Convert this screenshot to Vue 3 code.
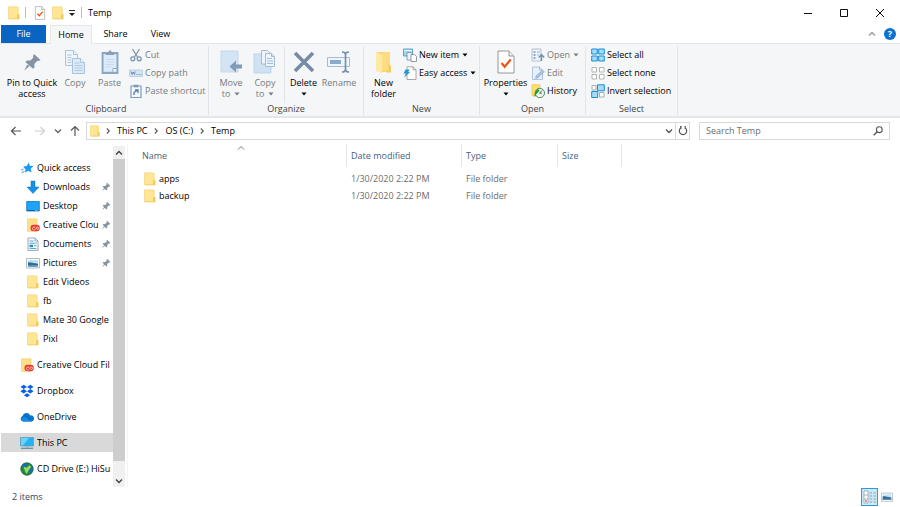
<script setup>
import { ref } from 'vue'

const query = ref('')
const selected = ref('This PC')
const view = ref('details')

const quickAccess = [
  { name: 'Downloads', icon: 'download', pinned: true },
  { name: 'Desktop', icon: 'desktop', pinned: true },
  { name: 'Creative Clou', icon: 'creative', pinned: true },
  { name: 'Documents', icon: 'document', pinned: true },
  { name: 'Pictures', icon: 'picture', pinned: true },
  { name: 'Edit Videos', icon: 'folder' },
  { name: 'fb', icon: 'folder' },
  { name: 'Mate 30 Google', icon: 'folder' },
  { name: 'Pixl', icon: 'folder' },
]
const places = [
  { name: 'Creative Cloud Fil', icon: 'creative' },
  { name: 'Dropbox', icon: 'dropbox' },
  { name: 'OneDrive', icon: 'onedrive' },
  { name: 'This PC', icon: 'pc' },
  { name: 'CD Drive (E:) HiSu', icon: 'disc' },
]
const crumbs = ['This PC', 'OS (C:)', 'Temp']
const files = [
  { name: 'apps', date: '1/30/2020 2:22 PM', type: 'File folder' },
  { name: 'backup', date: '1/30/2020 2:22 PM', type: 'File folder' },
]
const groups = [
  {
    label: 'Clipboard', key: 'clipboard',
    large: [
      { lines: ['Pin to Quick', 'access'], icon: 'bigpin', size: 'w-pin' },
      { lines: ['Copy'], icon: 'copy', size: 'w-copy', dim: true },
      { lines: ['Paste'], icon: 'paste', size: 'w-paste', dim: true },
    ],
    small: [
      { label: 'Cut', icon: 'cut', dim: true },
      { label: 'Copy path', icon: 'path', dim: true },
      { label: 'Paste shortcut', icon: 'shortcut', dim: true },
    ],
  },
  {
    label: 'Organize', key: 'organize',
    large: [
      { lines: ['Move', 'to'], icon: 'move', size: 'w-move', dim: true, inlineCaret: true },
      { lines: ['Copy', 'to'], icon: 'copyto', size: 'w-move', dim: true, inlineCaret: true },
      { lines: ['Delete'], icon: 'delete', size: 'w-delete', caret: true, split: true },
      { lines: ['Rename'], icon: 'rename', size: 'w-move', dim: true },
    ],
    small: [],
  },
  {
    label: 'New', key: 'new',
    large: [{ lines: ['New', 'folder'], icon: 'newfolder', size: 'w-new' }],
    small: [
      { label: 'New item', icon: 'newitem', caret: true },
      { label: 'Easy access', icon: 'easy', caret: true },
    ],
  },
  {
    label: 'Open', key: 'open',
    large: [{ lines: ['Properties'], icon: 'properties', size: 'w-props', caret: true }],
    small: [
      { label: 'Open', icon: 'open', dim: true, caret: true },
      { label: 'Edit', icon: 'edit', dim: true },
      { label: 'History', icon: 'history' },
    ],
  },
  {
    label: 'Select', key: 'select',
    large: [],
    small: [
      { label: 'Select all', icon: 'selall' },
      { label: 'Select none', icon: 'selnone' },
      { label: 'Invert selection', icon: 'selinv' },
    ],
  },
]
</script>

<template>
  <div class="window">
    <svg class="sprite" aria-hidden="true">
      <symbol id="folder" viewBox="0 0 14 14">
        <path d="M1.500.8h9v12h-9z" fill="#ffe694" stroke="#f2d072" stroke-width=".6" />
        <path d="M10 8h2.500v5.300H2v-.8h8z" fill="#f5cb58" />
        <path d="M10.200 1.200h1.500V8.500h-1.500z" fill="#ffe08a" />
      </symbol>
      <symbol id="creative" viewBox="0 0 14 14">
        <path d="M1.500.8h9.500v12.500H1.500z" fill="#ffe08a" stroke="#efc964" stroke-width=".6" />
        <rect x="4.500" y="6.800" width="9.300" height="6.500" rx="3.200" fill="#e8372c" />
        <path d="M9.300 11.500c-1 .9-2.800.5-2.800-1 0-1.600 1.900-1.900 2.700-.8l1.200 1.300c1 .9 2.300.2 2.200-.8-.1-1.400-1.900-1.600-2.600-.5" fill="none" stroke="#fff" stroke-width=".7" />
      </symbol>
      <symbol id="doc-check" viewBox="0 0 18 24">
        <path d="M1 1h11l5 5v17H1z" fill="#fff" stroke="#969696" />
        <path d="M12 1v5h5" fill="#eee" stroke="#969696" />
        <path d="M4.500 13l3.200 3.700 6-7.200" fill="none" stroke="#f0540f" stroke-width="2.200" />
      </symbol>
      <symbol id="star" viewBox="0 0 14 14">
        <path d="M8.800 1.500l.9 3.200 3.600.3-2.600 2.700.8 3.800-3.300-1.800-3 2 .3-3.500-2.400-2.400 3.600-.7z" fill="#1a9af0" />
        <path d="M.8 9l2.700-.8M1.500 12l3-2" stroke="#5fb9f5" stroke-width="1.200" />
      </symbol>
      <symbol id="download" viewBox="0 0 14 14">
        <path d="M5 1h4v6h4l-6 6.500L1 7h4z" fill="#1390e8" stroke="#0b79cc" stroke-width=".5" />
      </symbol>
      <symbol id="desktop" viewBox="0 0 14 14">
        <path d="M.7 2.500h12.600v9.500H.7z" fill="#1ea2fa" stroke="#0878c8" stroke-width=".8" />
        <path d="M1 11.500h12" stroke="#0765ad" stroke-width="1" /><path d="M9 11.500h3" stroke="#8ed4ff" stroke-width=".6" />
      </symbol>
      <symbol id="document" viewBox="0 0 14 14">
        <path d="M2 1h7l3 3v9.500H2z" fill="#f8fbfd" stroke="#8498a5" stroke-width=".8" />
        <path d="M9 1v3h3" fill="none" stroke="#8498a5" stroke-width=".7" />
        <path d="M3.500 4h4M3.500 6.200h7M3.500 11.500h7" stroke="#4ba2cf" stroke-width=".9" />
        <path d="M3.500 7.700h3.500v2.500H3.500z" fill="#2790c9" /><path d="M8 8.800h2.500" stroke="#4ba2cf" />
      </symbol>
      <symbol id="picture" viewBox="0 0 14 14">
        <path d="M.5 2.500h13v9.500H.5z" fill="#fff" stroke="#a2a8ab" stroke-width=".8" />
        <path d="M2 4h10v6.500H2z" fill="#bfe3f6" />
        <path d="M2 6.200c3-.2 5 .6 10 1.500v2.800H2z" fill="#336a91" /><path d="M2 9h10v1.500H2z" fill="#5595bc" />
      </symbol>
      <symbol id="dropbox" viewBox="0 0 14 14">
        <path d="M3.700.8L7 3 3.700 5.100.4 3zM10.300.8L13.600 3l-3.300 2.100L7 3zM3.700 5.100L7 7.200 3.700 9.400.4 7.200zM10.300 5.100l3.300 2.100-3.300 2.200L7 7.200zM7 9.300l3.100 2L7 13.300l-3.100-2z" fill="#0a5fe8" />
      </symbol>
      <symbol id="onedrive" viewBox="0 0 14 14">
        <path d="M3.300 11.500A2.900 2.900 0 012.500 6a4.200 4.200 0 017.800-.6 3.100 3.100 0 011.200 6.100z" fill="#0a75d0" />
        <path d="M6 6.500l5.800 4.900H3.300C1.500 11.500.6 10 .6 8.800z" fill="#1689e0" /><path d="M4.500 5l5.500 5" stroke="#075bb0" stroke-width="1" />
      </symbol>
      <symbol id="pc" viewBox="0 0 14 14">
        <path d="M.5 1.500h13v8.500H.5z" fill="#27b1ef" stroke="#5c9ab8" stroke-width=".7" />
        <path d="M1 2h8L3 9.600H1z" fill="#68d3fa" />
        <path d="M5.500 10.300h3v1.200h-3z" fill="#a5b0b7" /><path d="M1 12.300h12" stroke="#5c8aa5" stroke-width="1.200" />
      </symbol>
      <symbol id="disc" viewBox="0 0 14 14">
        <circle cx="7" cy="7" r="6.200" fill="#258a3b" stroke="#174f47" stroke-width=".8" />
        <path d="M3 1.800C6 1 8 2 7 4L4.500 6 1 5zM8 7l4.500-3c1 3 .3 5.500-1.700 7.300L8 10z" fill="#1c6cad" />
        <path d="M3.500 4.500l3.200 1.200 3-2.500L11 5 8 9.500 6.500 12 5 9z" fill="#8fe05a" />
      </symbol>
      <symbol id="pin" viewBox="0 0 12 12">
        <path d="M7.300.8l4 4-1.200.7-.7-.2-2 2 .1 2-1 .9L2 5.700l1-.9 2 .1 1.900-2-.3-.8zM3.800 7.200l1 1L1 11.200z" fill="#8795a1" />
      </symbol>
      <symbol id="bigpin" viewBox="0 0 24 24">
        <path d="M14 4l6.500 6-1.800 1-1.400-.3-3 3.300.3 3.300-1.600 1.500-7.600-6.900 1.500-1.500 3.500.2 3-3.200-.4-1.500zM7.500 14.500l2 1.700L4 20.500z" fill="#8493a2" />
      </symbol>
      <symbol id="copy" viewBox="0 0 24 24">
        <g fill="#edf4fb" stroke="#a9c3dc"><path d="M2.500.5h8l4 4v11h-12z" /><path d="M10.500.5v4h4" />
          <path d="M9.500 8.500h8l4 4v11h-12z" fill="#dce9f6" /><path d="M17.500 8.500v4h4" /></g>
        <path d="M4.500 5h4M4.500 7.500h4M4.500 10h4M4.500 12.500h4M11.500 13h5M11.500 15.500h8M11.500 18h8M11.500 20.500h8" stroke="#b0c8e0" />
      </symbol>
      <symbol id="paste" viewBox="0 0 24 24">
        <path d="M4.500 3h15v20h-15z" fill="#c9def2" stroke="#8aa6c5" stroke-width="1.800" /><path d="M6 5h12v16H6z" fill="#dceafa" />
        <path d="M8 5V2h2.500L11 .5h2l.5 1.500H16v3z" fill="#8b9eb2" />
        <path d="M8 9.500h8M8 12h8M8 14.500h8M8 17h5" stroke="#c8dbee" /><path d="M15 22.500v-4h4" fill="#fff" stroke="#8aa6c5" />
      </symbol>
      <symbol id="move" viewBox="0 0 24 24">
        <path d="M2 1h17v21H2z" fill="#d3e4f4" stroke="#c3d8ec" />
        <path d="M23 14.500h-6v-4L10.500 16.500l6.500 6v-4h6z" fill="#819bb8" />
      </symbol>
      <symbol id="copyto" viewBox="0 0 24 24">
        <path d="M1 4h17v19H1z" fill="#cfe1f3" stroke="#bfd5ea" />
        <path d="M8.500.5h6l2.500 2.500v11H8.500z" fill="#edf4fb" stroke="#a3bdd6" /><path d="M12.500 3.500h6l3 3v10h-9z" fill="#edf4fb" stroke="#a3bdd6" />
        <path d="M18.500 3.500v3h3M14 8.500h5M14 11h6M14 13.500h6" stroke="#a3bdd6" fill="none" />
      </symbol>
      <symbol id="delete" viewBox="0 0 24 24"><path d="M3 3l18 18M21 3L3 21" stroke="#748ca8" stroke-width="3.600" /></symbol>
      <symbol id="rename" viewBox="0 0 24 24">
        <path d="M.5 7.500h22v9H.5z" fill="#eff5fb" stroke="#a4bbd1" /><path d="M3 10h11v4H3z" fill="#8ba9c8" />
        <path d="M15 2c2 0 3.500.5 3.500 2.500v15c0 2-1.500 2.500-3.500 2.500M22 2c-2 0-3.500.5-3.500 2.500v15c0 2 1.500 2.500 3.500 2.500" fill="none" stroke="#7891ac" stroke-width="1.700" />
      </symbol>
      <symbol id="newfolder" viewBox="0 0 24 24">
        <path d="M4 2h14v20H8z" fill="#fbd673" /><path d="M4 2l6 3v18l-6-2z" fill="#ffe9a5" /><path d="M10 2.500h8V20h-8z" fill="#ffdc82" /><path d="M16.500 14l2.500 2v6.500h-5l2.500-2z" fill="#f5ca60" />
      </symbol>
      <symbol id="properties" viewBox="0 0 24 24"><use href="#doc-check" x="3" y="0" width="18" height="24" /></symbol>
      <symbol id="cut" viewBox="0 0 14 14">
        <path d="M3.500 1l5 8M10.500 1l-5 8" stroke="#8799ac" stroke-width="1.400" />
        <circle cx="3.800" cy="10.800" r="2" fill="none" stroke="#6e91b8" stroke-width="1.200" /><circle cx="10.200" cy="10.800" r="2" fill="none" stroke="#6e91b8" stroke-width="1.200" />
      </symbol>
      <symbol id="path" viewBox="0 0 14 14">
        <path d="M.5 4h13v6.500H.5z" fill="#d4e5f5" stroke="#b3c9de" stroke-width=".8" /><path d="M2 5.500l1 3L4.200 6l1.200 2.500.8-3M7.500 8.500h1M9.500 8.500h1M11.500 8.500h1" fill="none" stroke="#6687aa" stroke-width=".9" />
      </symbol>
      <symbol id="shortcut" viewBox="0 0 14 14">
        <path d="M2 2h10v11.500H2z" fill="#f5f9fd" stroke="#7c9bbd" stroke-width="1.200" /><path d="M4.500.8h5v2.500h-5z" fill="#8299b2" />
        <path d="M5 11V8.500L8 6.500M6 6h3v3" fill="none" stroke="#537ba8" stroke-width="1.300" />
      </symbol>
      <symbol id="newitem" viewBox="0 0 14 14">
        <path d="M.5 1h9v7h-9z" fill="#9edaf4" stroke="#3d8dbb" stroke-width=".8" /><path d="M1 2.500h8" stroke="#fff" />
        <path d="M4 4.500h4l2 2V12H4z" fill="#e9f5fc" stroke="#6f8ca0" stroke-width=".8" /><path d="M8 6.500h3.500l2 2v5H8z" fill="#fff" stroke="#79848e" stroke-width=".8" />
      </symbol>
      <symbol id="easy" viewBox="0 0 14 14">
        <path d="M4 .8h6l3 3v9.700H4z" fill="#fff" stroke="#929292" stroke-width=".8" /><path d="M10 .8v3h3" fill="none" stroke="#929292" stroke-width=".8" />
        <path d="M2.500 3.500h4.300L5.200 6h2L1 11.500l1.800-4H.5z" fill="#2798d4" />
      </symbol>
      <symbol id="open" viewBox="0 0 14 14">
        <path d="M1 1h9v12H1z" fill="#eef4f9" stroke="#a2b5c7" stroke-width=".8" /><path d="M2.500 3h2v2h-2zM2.500 6h2v2h-2zM2.500 9h2v2h-2z" fill="#91abc8" /><path d="M6 4h3M6 7h2" stroke="#a2b5c7" />
        <path d="M10.500 13V7M7.800 9.500L10.500 6.500 13.200 9.500" fill="none" stroke="#7190b2" stroke-width="1.400" />
      </symbol>
      <symbol id="edit" viewBox="0 0 14 14">
        <path d="M1.500 1h7l3 3v9.500h-10z" fill="#e8f1fa" stroke="#a0b9d2" stroke-width=".8" /><path d="M8.500 1v3h3" fill="none" stroke="#a0b9d2" /><path d="M4.500 12.500L5 10l6.500-6 1.800 1.800-6.500 6z" fill="#a9c5e1" stroke="#7a9bbd" stroke-width=".5" />
      </symbol>
      <symbol id="history" viewBox="0 0 14 14">
        <path d="M1 .8h8v11H1z" fill="#ffdf6c" stroke="#eac14c" stroke-width=".7" />
        <circle cx="8.800" cy="9" r="4.700" fill="#eef4ee" stroke="#4b8f58" stroke-width="1" /><path d="M3.500 13.300c-.5-3.500 1-7 3.500-8.500l1.500 2-2.500 2.500z" fill="#239b3c" /><path d="M8.500 9.200l2.500-2.700M8.500 9.200H11" stroke="#48645a" stroke-width=".9" />
      </symbol>
      <symbol id="selall" viewBox="0 0 14 14"><path d="M.7 1h5.600v5H.7zM7.700 1h5.600v5H7.700zM.7 8h5.600v5H.7zM7.700 8h5.600v5H7.700z" fill="#a7dcf9" stroke="#168ed5" /></symbol>
      <symbol id="selnone" viewBox="0 0 14 14"><path d="M1 1.500h4.500V6H1zM8.500 1.500H13V6H8.500zM1 8.500h4.500V13H1zM8.500 8.500H13V13H8.500z" fill="#fff" stroke="#ababab" stroke-width=".9" /></symbol>
      <symbol id="selinv" viewBox="0 0 14 14"><path d="M1 1.500h4V6H1zM8.500 8.500H13V13H8.500z" fill="#fff" stroke="#999" stroke-width=".8" /><path d="M6.500 .8h6.800v6H6.500zM.7 7.500h6v6h-6z" fill="#a7dcf9" stroke="#168ed5" /></symbol>
      <symbol id="caret" viewBox="0 0 6 4"><path d="M.5.5h5L3 3.500z" fill="currentColor" /></symbol>
      <symbol id="chev" viewBox="0 0 6 8"><path d="M1.800 1.500L4.300 4 1.800 6.500" fill="none" stroke="currentColor" stroke-width="1.100" /></symbol>
      <symbol id="down" viewBox="0 0 8 8"><path d="M1 2.500l3 3 3-3" fill="none" stroke="currentColor" stroke-width="1.400" /></symbol>
      <symbol id="up" viewBox="0 0 8 8"><path d="M1 5.500l3-3 3 3" fill="none" stroke="currentColor" stroke-width="1.400" /></symbol>
      <symbol id="thin-up" viewBox="0 0 8 8"><path d="M1 5.500l3-3 3 3" fill="none" stroke="currentColor" stroke-width=".9" /></symbol>
    </svg>

    <header class="titlebar">
      <svg class="i14"><use href="#folder" /></svg>
      <span class="bar"></span>
      <button class="plain quick check" aria-label="Properties"><svg class="i14"><use href="#doc-check" /></svg></button>
      <button class="plain quick" aria-label="New folder"><svg class="i14"><use href="#folder" /></svg></button>
      <button class="plain customize" aria-label="Customize Quick Access Toolbar">
        <svg viewBox="0 0 8 8" class="i8"><path d="M1 1.500h6" stroke="#222" /><path d="M1 4h6L4 7z" fill="#222" /></svg>
      </button>
      <span class="bar"></span>
      <h1 class="title">Temp</h1>
      <div class="controls">
        <button class="plain" aria-label="Minimize"><svg viewBox="0 0 10 10" class="i10"><path d="M1 5.500h8" stroke="#111" /></svg></button>
        <button class="plain" aria-label="Maximize"><svg viewBox="0 0 10 10" class="i10"><path d="M1.500 1.500h7v7h-7z" fill="none" stroke="#111" /></svg></button>
        <button class="plain" aria-label="Close"><svg viewBox="0 0 10 10" class="i10"><path d="M1 1l8 8M9 1L1 9" stroke="#111" /></svg></button>
      </div>
    </header>

    <nav class="tabs" aria-label="Ribbon tabs">
      <button class="tab file">File</button>
      <button class="tab active">Home</button>
      <button class="tab">Share</button>
      <button class="tab">View</button>
      <div class="tab-tools">
        <button class="plain" aria-label="Collapse ribbon"><svg class="i8"><use href="#up" /></svg></button>
        <button class="help" aria-label="Help">?</button>
      </div>
    </nav>

    <section class="ribbon">
      <div v-for="g in groups" :key="g.key" class="group" :class="g.key">
        <div class="group-body">
          <button v-for="b in g.large" :key="b.icon" class="large" :class="[b.size, { dim: b.dim, split: b.split }]">
            <svg class="i24"><use :href="'#' + b.icon" /></svg>
            <span v-for="(line, n) in b.lines" :key="n" class="line">{{ line }}<svg v-if="b.inlineCaret && n === 1" class="caret gap"><use href="#caret" /></svg></span>
            <span v-if="b.caret" class="line"><svg class="caret"><use href="#caret" /></svg></span>
          </button>
          <div v-if="g.small.length" class="small-col">
            <button v-for="b in g.small" :key="b.icon" class="small" :class="{ dim: b.dim }">
              <svg class="i14"><use :href="'#' + b.icon" /></svg><span>{{ b.label }}</span>
              <svg v-if="b.caret" class="caret"><use href="#caret" /></svg>
            </button>
          </div>
        </div>
        <div class="group-label">{{ g.label }}</div>
      </div>
    </section>

    <div class="navrow">
      <div class="arrows">
        <button class="plain" aria-label="Back"><svg viewBox="0 0 12 12" class="i12"><path d="M11 6H1.500M5.500 2l-4 4 4 4" fill="none" stroke="#555" stroke-width="1.200" /></svg></button>
        <button class="plain" aria-label="Forward"><svg viewBox="0 0 12 12" class="i12"><path d="M1 6h9.500M6.500 2l4 4-4 4" fill="none" stroke="#d0d0d0" stroke-width="1.200" /></svg></button>
        <button class="plain recent" aria-label="Recent locations"><svg class="i8"><use href="#down" /></svg></button>
        <button class="plain" aria-label="Up"><svg viewBox="0 0 12 12" class="i12"><path d="M6 11V1.500M2 5.500l4-4 4 4" fill="none" stroke="#555" stroke-width="1.200" /></svg></button>
      </div>
      <div class="address">
        <svg class="i12 lead"><use href="#folder" /></svg>
        <template v-for="c in crumbs" :key="c">
          <svg class="chev"><use href="#chev" /></svg><a href="#" class="crumb">{{ c }}</a>
        </template>
        <button class="plain drop" aria-label="Previous locations"><svg class="i8"><use href="#down" /></svg></button>
        <button class="plain refresh" aria-label="Refresh">
          <svg viewBox="0 0 12 12" class="i12"><path d="M3.800 3A3.700 3.700 0 108.200 3M8.200 1v2.700M3 1.700h1v2" fill="none" stroke="#555" stroke-width="1.200" /></svg>
        </button>
      </div>
      <div class="search">
        <input v-model="query" type="text" placeholder="Search Temp" aria-label="Search Temp" />
        <svg viewBox="0 0 12 12" class="i12"><circle cx="7.300" cy="4.700" r="2.900" fill="none" stroke="#555" stroke-width="1.100" /><path d="M5.200 6.800l-3.500 3.500" stroke="#555" stroke-width="1.400" /></svg>
      </div>
    </div>

    <main class="content">
      <aside class="sidebar">
        <nav class="tree" aria-label="Folders">
          <div class="branch">
            <a href="#" class="node"><svg class="i14"><use href="#star" /></svg><span class="name">Quick access</span></a>
            <a v-for="q in quickAccess" :key="q.name" href="#" class="node child">
              <svg class="i14"><use :href="'#' + q.icon" /></svg><span class="name">{{ q.name }}</span>
              <svg v-if="q.pinned" class="pin"><use href="#pin" /></svg>
            </a>
          </div>
          <a v-for="p in places" :key="p.name" href="#" class="node" :class="{ selected: selected === p.name }" @click.prevent="selected = p.name">
            <svg class="i14"><use :href="'#' + p.icon" /></svg><span class="name">{{ p.name }}</span>
          </a>
        </nav>
        <div class="scrollbar">
          <button class="plain" aria-label="Scroll up"><svg class="i8"><use href="#up" /></svg></button>
          <div class="track"><div class="thumb"></div></div>
          <button class="plain" aria-label="Scroll down"><svg class="i8"><use href="#down" /></svg></button>
        </div>
      </aside>
      <div class="files">
        <table>
          <colgroup><col class="c-name" /><col class="c-date" /><col class="c-type" /><col class="c-size" /><col /></colgroup>
          <thead>
            <tr>
              <th class="first">Name<svg class="i8 sort"><use href="#thin-up" /></svg></th>
              <th>Date modified</th><th>Type</th><th>Size</th><td></td>
            </tr>
          </thead>
          <tbody>
            <tr v-for="f in files" :key="f.name">
              <td class="first"><span class="entry"><svg class="i14"><use href="#folder" /></svg>{{ f.name }}</span></td>
              <td>{{ f.date }}</td><td>{{ f.type }}</td><td></td><td></td>
            </tr>
          </tbody>
        </table>
      </div>
    </main>

    <footer class="status">
      <span>2 items</span>
      <div class="views">
        <button class="view" :class="{ on: view === 'details' }" aria-label="Details view" @click="view = 'details'">
          <svg viewBox="0 0 14 14" class="i14"><path d="M1 1h4v12H1z" fill="#fff" stroke="#8b9aa5" stroke-width=".7" /><path d="M1 5h4M1 9h4" stroke="#8b9aa5" stroke-width=".7" /><path d="M2 10h2v2H2z" fill="#e39888" /><path d="M6.500 3H9M10.500 3H13M6.500 6H9M10.500 6H13M6.500 9H9M10.500 9H13M6.500 12H9M10.500 12H13" stroke="#8ba5b2" /></svg>
        </button>
        <button class="view" :class="{ on: view === 'large' }" aria-label="Large thumbnails" @click="view = 'large'"><svg class="i12"><use href="#picture" /></svg></button>
      </div>
    </footer>
  </div>
</template>

<style>
body { margin: 0; background: #fff; }
</style>

<style scoped>
.window {
  display: flex; flex-direction: column; min-height: 100vh; overflow: hidden;
  font-family: "Open Sans", "Noto Sans", sans-serif; font-size: 9px; line-height: 12px; color: #000; background: #fff;
}
.window *, .window { box-sizing: border-box; }
.sprite { position: absolute; width: 0; height: 0; }
svg { display: block; flex: none; }
button, input { font: inherit; color: inherit; }
button { border: 0; padding: 0; margin: 0; background: none; }
a { color: inherit; text-decoration: none; }
.plain { display: flex; align-items: center; justify-content: center; }
.i8 { width: 8px; height: 8px; }
.i10 { width: 10px; height: 10px; }
.i12 { width: 12px; height: 12px; }
.i14 { width: 14px; height: 14px; }
.i24 { width: 24px; height: 24px; }

.titlebar { display: flex; align-items: center; height: 25px; padding-left: 7px; }
.bar { width: 1px; height: 11px; margin: 0 4px; background: #bdbdbd; }
.quick { width: 18px; }
.check { margin-left: 1px; }
.customize { width: 10px; }
.title { margin: 0 0 0 2px; font-size: 9px; font-weight: 400; }
.controls { display: flex; margin-left: auto; padding-right: 2px; }
.controls button { width: 36px; height: 25px; }

.tabs { display: flex; height: 18px; padding-left: 1px; position: relative; z-index: 1; }
.tab { width: 45px; height: 18px; }
.file { background: #0a64c2; color: #fff; margin-right: 4px; }
.active { width: 42px; height: 19px; margin-right: 1px; background: #f5f6f7; border: 1px solid #e4e6e8; border-bottom: 0; }
.tab-tools { display: flex; align-items: center; gap: 8px; margin-left: auto; padding-right: 4px; color: #999; }
.help { width: 12px; height: 12px; border-radius: 6px; background: #0a72d0; color: #fff; font-weight: 700; line-height: 12px; }

.ribbon { display: flex; height: 75px; padding: 2px 0 0 4px; background: #f5f6f7; border-top: 1px solid #e4e6e8; border-bottom: 2px solid #e4e7e8; }
.group { display: flex; flex-direction: column; flex: none; height: 69px; border-right: 1px solid #e1e5e7; }
.clipboard { width: 205px; }
.organize { width: 155px; }
.new { width: 116px; }
.open { width: 106px; }
.select { width: 92px; }
.group-body { display: flex; height: 57px; }
.organize .group-body { padding-left: 5px; }
.select .group-body { padding-left: 5px; }
.group-label { height: 12px; text-align: center; color: #454545; }
.large { display: flex; flex: none; flex-direction: column; align-items: center; padding-top: 4px; white-space: nowrap; }
.line { display: flex; align-items: center; justify-content: center; height: 11px; line-height: 11px; }
.large .i24 { margin-bottom: 3px; }
.w-pin { width: 56px; }
.w-copy { width: 30px; }
.w-paste { width: 39px; }
.w-move { width: 34px; }
.w-delete { width: 38px; }
.w-new { width: 39px; }
.w-props { width: 51px; }
.split { margin-left: 2px; border-left: 1px solid #e1e5e7; }
.dim { color: #767b80; }
.caret { width: 6px; height: 4px; }
.gap { margin-left: 4px; }
.small-col { display: flex; flex-direction: column; }
.small { display: flex; align-items: center; gap: 2px; height: 18px; white-space: nowrap; }
.small .caret { margin-left: 1px; }

.navrow { display: flex; align-items: center; height: 26px; padding: 0 10px 0 10px; }
.arrows { display: flex; flex: none; width: 76px; gap: 12px; }
.recent { width: 8px; margin: 0 -5px 0 -4px; color: #666; }
.address { display: flex; align-items: center; flex: 1; height: 18px; border: 1px solid #d9d9d9; padding-left: 2px; }
.chev { width: 6px; height: 8px; margin: 0 6px; color: #555; }
.lead + .chev { margin-left: 4px; }
.drop { width: 12px; height: 16px; margin-left: auto; color: #555; }
.refresh { width: 14px; height: 16px; border-left: 1px solid #d9d9d9; }
.search { display: flex; align-items: center; width: 191px; height: 18px; margin-left: 9px; padding: 0 5px 0 6px; border: 1px solid #d9d9d9; }
.search input { flex: 1; min-width: 0; border: 0; outline: 0; padding: 0; background: none; }
.search input::placeholder { color: #6d6d6d; opacity: 1; }

.content { display: flex; flex: 1; }
.sidebar { display: flex; width: 128px; padding: 2px 2px 0 1px; border-right: 1px solid #f4f4f4; }
.tree { display: flex; flex-direction: column; flex: 1; gap: 7px; min-width: 0; padding-top: 12px; }
.node { display: flex; align-items: center; height: 19px; gap: 3px; padding-left: 19px; }
.child { padding-left: 25px; }
.name { flex: 1; min-width: 0; overflow: hidden; white-space: nowrap; }
.pin { width: 10px; height: 10px; margin: 0 2px 0 -3px; }
.selected { background: #d9d9d9; }
.scrollbar { display: flex; flex-direction: column; flex: none; width: 12px; background: #f0f0f0; color: #444; }
.scrollbar .plain { height: 13px; }
.track { display: flex; flex-direction: column; flex: 1; }
.thumb { height: 96%; background: #cdcdcd; }

.files { flex: 1; min-width: 0; }
table { width: 100%; table-layout: fixed; border-collapse: separate; border-spacing: 0; }
.c-name { width: 219px; }
.c-date { width: 115px; }
.c-type { width: 96px; }
.c-size { width: 64px; }
th { position: relative; height: 23px; padding: 0 0 0 4px; text-align: left; font-weight: 400; color: #456280; border-right: 1px solid #e5e5e5; }
td { height: 17px; padding: 0 0 0 4px; color: #6d6d6d; }
th.first { padding-left: 14px; }
td.first { padding-left: 15px; color: #000; }
.sort { position: absolute; top: 0; left: 50%; color: #666; }
.entry { display: flex; align-items: center; gap: 2px; }
tbody::before { content: ""; display: table-row; height: 3px; }

.status { display: flex; align-items: center; justify-content: space-between; height: 20px; padding: 0 5px 0 12px; color: #29486a; }
.views { display: flex; align-items: center; }
.view { display: flex; align-items: center; justify-content: center; width: 17px; height: 18px; border: 1px solid transparent; }
.view.on { border-color: #26a0da; background: #cce8f7; }
</style>
